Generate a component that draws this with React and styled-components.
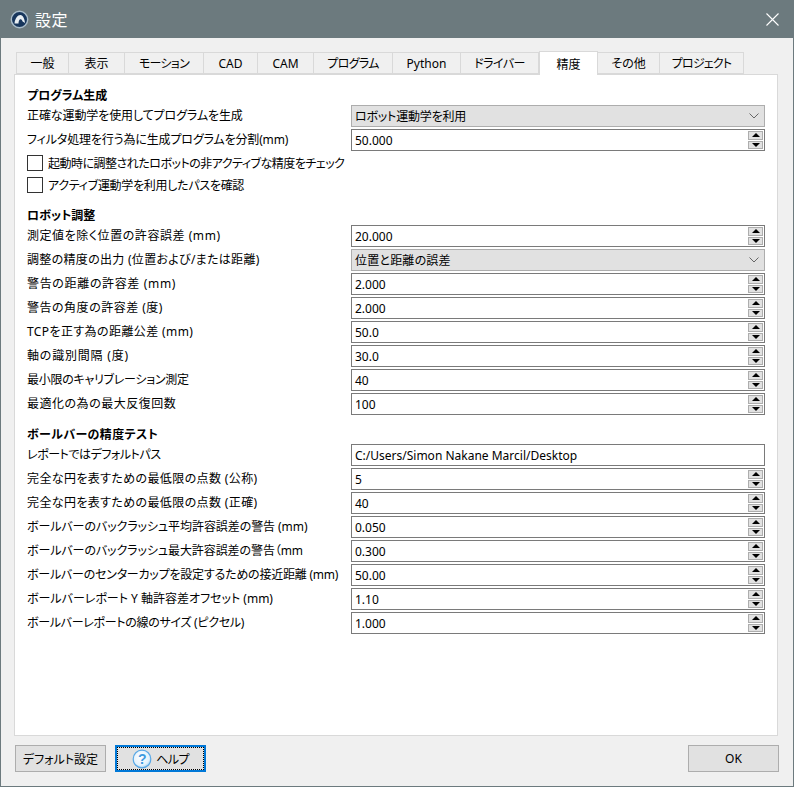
import React from "react";
import styled, { createGlobalStyle } from "styled-components";

const GlobalStyle = createGlobalStyle`
  html, body { margin: 0; padding: 0; background: #f0f0f0; }
  body {
    font-family: "Noto Sans", "Noto Sans CJK JP", sans-serif;
    font-size: 12px;
    font-feature-settings: "palt";
    color: #000;
  }
`;

const Window = styled.div`
  box-sizing: border-box;
  width: 794px;
  height: 787px;
  display: flex;
  flex-direction: column;
  border: 1px solid #6c7a7e;
  border-top: 0;
  background: #f0f0f0;
  overflow: hidden;
`;

const TitleBar = styled.div`
  height: 38px;
  flex: none;
  margin: 0 -1px;
  padding: 0 10px;
  display: flex;
  align-items: center;
  gap: 6px;
  background: #6c7a7e;
  color: #fff;
`;

const TitleText = styled.span`
  flex: 1;
  font-size: 16px;
  letter-spacing: 0.5px;
`;

const CloseButton = styled.svg`
  width: 13px;
  height: 13px;
  margin-right: 5px;
`;

const Body = styled.div`
  flex: 1;
  display: flex;
  flex-direction: column;
  padding: 13px 15px 15px 13px;
`;

const TabBar = styled.div`
  height: 23px;
  display: flex;
  align-items: flex-end;
  padding-left: 2px;
  position: relative;
  z-index: 1;
`;

const Tab = styled.div`
  box-sizing: border-box;
  width: ${p => p.$w}px;
  height: ${p => (p.$active ? 24 : 22)}px;
  margin-bottom: ${p => (p.$active ? -1 : 0)}px;
  display: flex;
  align-items: center;
  justify-content: center;
  border: 1px solid #d9d9d9;
  border-left-width: ${p => (p.$active ? 1 : 0)}px;
  border-bottom: ${p => (p.$active ? "0" : "1px solid #d9d9d9")};
  background: ${p => (p.$active ? "#fff" : "#f0f0f0")};
  letter-spacing: ${p => p.$ls || 0}px;
  &:first-child { border-left-width: 1px; }
`;

const Panel = styled.div`
  box-sizing: border-box;
  height: 662px;
  border: 1px solid #d9d9d9;
  background: #fff;
  padding: 11px 12px 0 12px;
`;

const Section = styled.section`
  margin-bottom: 10px;
`;

const Heading = styled.div`
  height: 19px;
  line-height: 19px;
  font-weight: 700;
  letter-spacing: ${p => p.$ls || 0}px;
`;

const Row = styled.div`
  display: grid;
  grid-template-columns: 324px 414px;
  height: 22px;
  margin-bottom: 2px;
  align-items: center;
  white-space: nowrap;
`;

const Label = styled.span`
  line-height: 22px;
  letter-spacing: ${p => p.$ls || 0}px;
`;

const Field = styled.div`
  box-sizing: border-box;
  height: 22px;
  display: flex;
  align-items: center;
  padding-left: 3px;
  border: 1px solid #7a7a7a;
  background: #fff;
  position: relative;
`;

const Combo = styled(Field)`
  border-color: #adadad;
  background: #e1e1e1;
  letter-spacing: ${p => p.$ls || 0}px;
`;

const Chevron = styled.svg`
  position: absolute;
  right: 5px;
  top: 7px;
  width: 10px;
  height: 6px;
`;

const SpinBox = styled.div`
  position: absolute;
  right: 1px;
  top: 1px;
  width: 15px;
  height: 18px;
  display: flex;
  flex-direction: column;
  gap: 1px;
`;

const SpinStep = styled.div`
  box-sizing: border-box;
  flex: 1;
  display: flex;
  align-items: center;
  justify-content: center;
  background: #e1e1e1;
  border: 1px solid #adadad;
  &::before {
    content: "";
    border-left: 4px solid transparent;
    border-right: 4px solid transparent;
    ${p =>
      p.$down
        ? "border-top: 4px solid #000;"
        : "border-bottom: 4px solid #000;"}
  }
`;

const CheckRow = styled.label`
  height: 22px;
  display: flex;
  align-items: center;
  gap: 5px;
  white-space: nowrap;
  letter-spacing: ${p => p.$ls || 0}px;
`;

const CheckBox = styled.span`
  box-sizing: border-box;
  width: 16px;
  height: 16px;
  border: 1px solid #333;
  background: #fff;
`;

const CheckGroup = styled.div`
  margin: -1px 0 2px;
`;

const Footer = styled.div`
  display: flex;
  align-items: center;
  gap: 9px;
  padding: 9px 0 0 1px;
`;

const Button = styled.button`
  box-sizing: border-box;
  width: 91px;
  height: 27px;
  padding: 0;
  display: flex;
  align-items: center;
  justify-content: center;
  gap: 4px;
  border: 1px solid #adadad;
  background: #e1e1e1;
  color: #000;
  font: inherit;
  font-feature-settings: inherit;
  position: relative;
`;

const FocusButton = styled(Button)`
  border: 2px solid #0078d7;
  letter-spacing: -0.6px;
  &::after {
    content: "";
    position: absolute;
    inset: 0;
    border: 1px dotted #000;
  }
`;

const OkButton = styled(Button)`
  margin-left: auto;
  margin-right: -1px;
`;

const Stepper = () => (
  <SpinBox>
    <SpinStep />
    <SpinStep $down />
  </SpinBox>
);

const Spin = ({ label, value, ls }) => (
  <Row>
    <Label $ls={ls}>{label}</Label>
    <Field>
      {value}
      <Stepper />
    </Field>
  </Row>
);

const Select = ({ label, value, ls, valueLs }) => (
  <Row>
    <Label $ls={ls}>{label}</Label>
    <Combo $ls={valueLs}>
      {value}
      <Chevron viewBox="0 0 10 6">
        <path d="M0.5 0.5 L5 5 L9.5 0.5" fill="none" stroke="#666" strokeWidth="1" />
      </Chevron>
    </Combo>
  </Row>
);

const tabs = [
  ["一般", 53],
  ["表示", 56],
  ["モーション", 79, -0.7],
  ["CAD", 54],
  ["CAM", 56],
  ["プログラム", 79, -0.7],
  ["Python", 68],
  ["ドライバー", 78, -0.5],
  ["精度", 59],
  ["その他", 62],
  ["プロジェクト", 84, -0.8],
];

// the letter spacing follows how wide each label runs in the dialog
const robotRows = [
  ["警告の距離の許容差 (mm)", "2.000", 0.65],
  ["警告の角度の許容差 (度)", "2.000", 0.5],
  ["TCPを正す為の距離公差 (mm)", "50.0", 0.4],
  ["軸の識別間隔 (度)", "30.0", 0.8],
  ["最小限のキャリブレーション測定", "40", -0.27],
  ["最適化の為の最大反復回数", "100", 0.5],
];

const ballbarRows = [
  ["完全な円を表すための最低限の点数 (公称)", "5", 0.38],
  ["完全な円を表すための最低限の点数 (正確)", "40", 0.38],
  ["ボールバーのバックラッシュ平均許容誤差の警告 (mm)", "0.050", -0.07],
  ["ボールバーのバックラッシュ最大許容誤差の警告（mm", "0.300", -0.08],
  ["ボールバーのセンターカップを設定するための接近距離 (mm)", "50.00", -0.22],
  ["ボールバーレポート Y 軸許容差オフセット (mm)", "1.10", 0],
  ["ボールバーレポートの線のサイズ (ピクセル)", "1.000", -0.3],
];

const AppLogo = () => (
  <svg width="19" height="19" viewBox="0 0 19 19">
    <circle cx="9.5" cy="9.5" r="8.2" fill="#17365c" stroke="#a9bcc9" strokeWidth="1.4" />
    <path d="M4.5 13.5 C5 8 8 4.8 10.5 5 C13 5.2 14.5 9 15 13 L12.6 11.5 C12 9.5 11 8.8 10 9.3 C9 10 8.5 12 8.5 13.5 Z" fill="#e8eef2" />
  </svg>
);

const HelpIcon = () => (
  <svg width="20" height="20" viewBox="0 0 20 20">
    <defs>
      <radialGradient id="helpFill" cx="0.45" cy="0.4" r="0.65">
        <stop offset="0" stopColor="#ffffff" />
        <stop offset="0.7" stopColor="#e4f2fc" />
        <stop offset="1" stopColor="#8cc6f0" />
      </radialGradient>
    </defs>
    <circle cx="10" cy="10" r="8.8" fill="url(#helpFill)" stroke="#5aa9e6" strokeWidth="1.2" />
    <text x="10" y="15" textAnchor="middle" fontSize="14" fontWeight="700" fill="#3f9be0" fontFamily="Liberation Sans, sans-serif">?</text>
  </svg>
);

export default function App() {
  return (
    <>
      <GlobalStyle />
      <Window>
        <TitleBar>
          <AppLogo />
          <TitleText>設定</TitleText>
          <CloseButton viewBox="0 0 13 13">
            <path d="M0.5 0.5 L12.5 12.5 M12.5 0.5 L0.5 12.5" stroke="#fff" strokeWidth="1.1" fill="none" />
          </CloseButton>
        </TitleBar>
        <Body>
          <TabBar>
            {tabs.map(([name, w, ls]) => (
              <Tab key={name} $w={w} $ls={ls} $active={name === "精度"}>
                {name}
              </Tab>
            ))}
          </TabBar>
          <Panel>
            <Section>
              <Heading>プログラム生成</Heading>
              <Select label="正確な運動学を使用してプログラムを生成" value="ロボット運動学を利用" ls={-0.1} valueLs={-0.2} />
              <Spin label="フィルタ処理を行う為に生成プログラムを分割(mm)" value="50.000" ls={-0.15} />
              <CheckGroup>
                <CheckRow $ls={-0.5}>
                  <CheckBox />
                  起動時に調整されたロボットの非アクティブな精度をチェック
                </CheckRow>
                <CheckRow $ls={-0.28}>
                  <CheckBox />
                  アクティブ運動学を利用したパスを確認
                </CheckRow>
              </CheckGroup>
            </Section>
            <Section>
              <Heading>ロボット調整</Heading>
              <Spin label="測定値を除く位置の許容誤差 (mm)" value="20.000" ls={0.55} />
              <Select label="調整の精度の出力 (位置および/または距離)" value="位置と距離の誤差" ls={0.3} valueLs={0.2} />
              {robotRows.map(([label, value, ls]) => (
                <Spin key={label} label={label} value={value} ls={ls} />
              ))}
            </Section>
            <Section>
              <Heading $ls={0.4}>ボールバーの精度テスト</Heading>
              <Row>
                <Label $ls={-0.45}>レポートではデフォルトパス</Label>
                <Field>C:/Users/Simon Nakane Marcil/Desktop</Field>
              </Row>
              {ballbarRows.map(([label, value, ls]) => (
                <Spin key={label} label={label} value={value} ls={ls} />
              ))}
            </Section>
          </Panel>
          <Footer>
            <Button>デフォルト設定</Button>
            <FocusButton>
              <HelpIcon />
              ヘルプ
            </FocusButton>
            <OkButton>OK</OkButton>
          </Footer>
        </Body>
      </Window>
    </>
  );
}
